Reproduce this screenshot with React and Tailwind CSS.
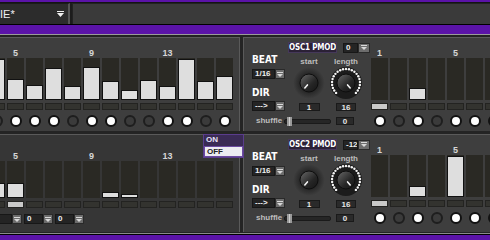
import React from 'react';

const topLeft = [
  { n: 4, h: 41, on: false },
  { n: 5, h: 21, on: true },
  { n: 6, h: 15, on: true },
  { n: 7, h: 32, on: true },
  { n: 8, h: 14, on: false },
  { n: 9, h: 33, on: true },
  { n: 10, h: 19, on: true },
  { n: 11, h: 10, on: false },
  { n: 12, h: 20, on: false },
  { n: 13, h: 14, on: true },
  { n: 14, h: 41, on: true },
  { n: 15, h: 19, on: false },
  { n: 16, h: 24, on: true },
];

const bottomLeft = [
  { n: 4, h: 15 },
  { n: 5, h: 15, led: true },
  { n: 6, h: 0 },
  { n: 7, h: 0 },
  { n: 8, h: 0 },
  { n: 9, h: 0 },
  { n: 10, h: 6 },
  { n: 11, h: 4 },
  { n: 12, h: 0 },
  { n: 13, h: 0 },
  { n: 14, h: 0 },
  { n: 15, h: 0 },
  { n: 16, h: 0 },
];

const osc1 = [
  { n: 1, h: 0, on: true, led: true },
  { n: 2, h: 0, on: false },
  { n: 3, h: 12, on: true },
  { n: 4, h: 0, on: false },
  { n: 5, h: 0, on: true },
  { n: 6, h: 0, on: true },
  { n: 7, h: 0, on: true },
];

const osc2 = [
  { n: 1, h: 0, on: true, led: true },
  { n: 2, h: 0, on: false },
  { n: 3, h: 11, on: true },
  { n: 4, h: 0, on: false },
  { n: 5, h: 41, on: true },
  { n: 6, h: 0, on: true },
  { n: 7, h: 0, on: true },
];

const showLabel = (n) => n === 1 || n === 5 || n === 9 || n === 13;

const Step = ({ s, colH = 42, circles = true }) => (
  <div className="w-[17px] shrink-0 flex flex-col items-center">
    <div className="h-[9px] text-[9px] leading-[9px] font-bold text-[#d6d6d6]">
      {showLabel(s.n) ? s.n : ''}
    </div>
    <div className="w-[17px] bg-[#2a2924] flex flex-col justify-end" style={{ height: colH }}>
      {s.h > 0 && <div className="w-full bg-[#dedede] border border-[#111]" style={{ height: s.h }} />}
    </div>
    <div
      className={
        'mt-[3px] w-[17px] h-[7px] border border-[#232321] ' +
        (s.led ? 'bg-[#c9c9c9]' : 'bg-[#33332f]')
      }
    />
    {circles && (
      <div
        className={
          'mt-[5px] w-[12px] h-[12px] rounded-full border-2 ' +
          (s.on ? 'bg-white border-[#121212]' : 'bg-[#3b3b3b] border-[#1e1e1e]')
        }
      />
    )}
  </div>
);

const Arrow = ({ w = 'w-[10px]' }) => (
  <div className={w + ' h-full bg-[#6d6d6d] border border-[#2a2a2a] flex items-center justify-center'}>
    <svg width="6" height="5" viewBox="0 0 6 5">
      <rect x="0" y="0" width="6" height="1" fill="#d8d8d8" />
      <path d="M0 2 L6 2 L3 5 Z" fill="#d8d8d8" />
    </svg>
  </div>
);

const Drop = ({ text, w = 'w-[33px]', arrow = 'w-[10px]' }) => (
  <div className={w + ' h-[10px] flex'}>
    <div className="flex-1 h-full bg-[#242424] border border-[#171717] text-[8px] leading-[8px] font-bold text-[#eeeeee] pl-[2px] whitespace-nowrap overflow-hidden">
      {text}
    </div>
    <Arrow w={arrow} />
  </div>
);

const Knob = ({ angle, ring }) => {
  const rad = ((angle - 90) * Math.PI) / 180;
  const x1 = 17 + Math.cos(rad) * 2.5;
  const y1 = 17 + Math.sin(rad) * 2.5;
  const x2 = 17 + Math.cos(rad) * 6.5;
  const y2 = 17 + Math.sin(rad) * 6.5;
  const dots = [];
  if (ring) {
    for (let i = 0; i < 23; i++) {
      const a = ((-135 + (270 / 22) * i - 90) * Math.PI) / 180;
      dots.push(<circle key={i} cx={17 + Math.cos(a) * 14} cy={17 + Math.sin(a) * 14} r="1.2" fill="#f4f4f4" />);
    }
  }
  return (
    <svg width="34" height="34" viewBox="0 0 34 34">
      <defs>
        <radialGradient id="halo" cx="50%" cy="50%" r="50%">
          <stop offset="55%" stopColor="#262626" />
          <stop offset="100%" stopColor="#3f3f3f" />
        </radialGradient>
        <linearGradient id="body" x1="0" y1="0" x2="1" y2="1">
          <stop offset="0%" stopColor="#6a6a6a" />
          <stop offset="60%" stopColor="#262626" />
          <stop offset="100%" stopColor="#141414" />
        </linearGradient>
      </defs>
      {!ring && <circle cx="17" cy="17" r="16" fill="url(#halo)" />}
      {ring && <circle cx="17" cy="17" r="16" fill="#1c1c1c" />}
      {dots}
      <circle cx="17" cy="17" r="9" fill="url(#body)" stroke="#0e0e0e" strokeWidth="1" />
      <line x1={x1} y1={y1} x2={x2} y2={y2} stroke="#f2f2f2" strokeWidth="1.6" strokeLinecap="round" />
    </svg>
  );
};

const Value = ({ v, w = 'w-[21px]' }) => (
  <div className={w + ' h-[8px] bg-[#2a2a2a] border border-[#1a1a1a] text-[8px] leading-[7px] font-bold text-[#e6e6e6] text-center'}>
    {v}
  </div>
);

const OscPanel = ({ name, val, steps }) => (
  <div className="h-full bg-[#3e3e3e] border-l border-t border-[#5a5a5a] flex overflow-hidden">
    <div className="w-[127px] shrink-0 flex flex-col">
      <div className="mt-[4px] ml-[44px] flex gap-[6px] items-center">
        <div className="w-[49px] h-[11px] bg-[#2b2136] border border-[#45385a] text-[8px] leading-[9px] font-bold text-white text-center whitespace-nowrap overflow-hidden font-['DejaVu_Sans_Condensed','DejaVu_Sans',sans-serif] tracking-[-0.2px]">
          {name}
        </div>
        <Drop text={val} w="w-[27px]" arrow="w-[12px]" />
      </div>
      <div className="flex">
        <div className="ml-[8px] w-[34px] flex flex-col">
          <div className="mt-[2px] text-[10px] leading-[10px] font-bold text-white font-['DejaVu_Sans_Condensed','DejaVu_Sans',sans-serif]">BEAT</div>
          <div className="mt-[4px]"><Drop text="1/16" /></div>
          <div className="mt-[9px] text-[10px] leading-[10px] font-bold text-white font-['DejaVu_Sans_Condensed','DejaVu_Sans',sans-serif]">DIR</div>
          <div className="mt-[3px]"><Drop text="--->" /></div>
        </div>
        <div className="ml-[6px] w-[34px] flex flex-col items-center">
          <div className="mt-[5px] h-[8px] text-[8px] leading-[8px] font-bold text-[#bdbdbd]">start</div>
          <Knob angle={220} />
          <div className="mt-[3px]"><Value v="1" /></div>
        </div>
        <div className="ml-[3px] w-[34px] flex flex-col items-center">
          <div className="mt-[5px] h-[8px] text-[8px] leading-[8px] font-bold text-[#bdbdbd]">length</div>
          <Knob angle={140} ring />
          <div className="mt-[3px]"><Value v="16" w="w-[20px]" /></div>
        </div>
      </div>
      <div className="mt-[6px] flex items-center h-[8px]">
        <div className="ml-[12px] w-[28px] text-[8px] leading-[8px] font-bold text-[#bdbdbd]">shuffle</div>
        <div className="w-[47px] h-[5px] bg-[#262626] border border-[#1a1a1a] rounded-[2px] flex items-center">
          <div className="ml-[2px] w-[5px] h-[9px] bg-[#cfcfcf] border-x-2 border-[#9a9a9a]" />
        </div>
        <div className="ml-[5px]"><Value v="0" w="w-[18px]" /></div>
      </div>
    </div>
    <div className="mt-[11px] flex gap-[2px]">
      {steps.map((s) => (
        <Step key={s.n} s={s} />
      ))}
    </div>
  </div>
);

export default function App() {
  return (
    <div className="w-[490px] h-[240px] overflow-hidden bg-[#242424] flex flex-col font-['Liberation_Sans',Arial,sans-serif]">
      <div className="h-[2px] bg-[#5b13a8]" />
      <div className="h-[1px] bg-[#141414]" />
      <div className="h-[21px] flex bg-[#1c1c1c]">
        <div className="w-[70px] bg-[#2c2c2c] border-t border-[#1a1a1a] border-r-2 border-r-[#555] flex items-center justify-between pr-[4px]">
          <span className="text-[11px] leading-[11px] text-[#f0f0f0]">IE*</span>
          <svg width="7" height="6" viewBox="0 0 7 6">
            <rect x="0" y="0" width="7" height="1" fill="#f0f0f0" />
            <path d="M0 2 L7 2 L3.5 6 Z" fill="#f0f0f0" />
          </svg>
        </div>
        <div className="w-[2px]" />
        <div className="flex-1 bg-[#3a3a3a] border-t border-l border-[#222]" />
      </div>
      <div className="h-[1px] bg-black" />
      <div className="h-[9px] bg-[#5b13a8]" />
      <div className="h-[1px] bg-[#9a9a9a]" />
      <div className="h-[2px] bg-[#222]" />
      <div className="relative grid grid-cols-[240px_247px] grid-rows-[94px_98px] gap-[3px]">
        <div className="bg-[#3e3e3e] border-r border-t border-[#5a5a5a] overflow-hidden">
          <div className="mt-[11px] ml-[-12px] flex gap-[2px]">
            {topLeft.map((s) => (
              <Step key={s.n} s={s} />
            ))}
          </div>
        </div>
        <OscPanel name="OSC1 PMOD" val="0" steps={osc1} />
        <div className="bg-[#363636] border-r border-t border-[#5a5a5a] overflow-hidden">
          <div className="mt-[17px] ml-[-12px] flex gap-[2px]">
            {bottomLeft.map((s) => (
              <Step key={s.n} s={s} colH={37} circles={false} />
            ))}
          </div>
          <div className="mt-[6px] ml-[-7px] flex gap-[2px]">
            {['', '0', '0'].map((v, i) => (
              <Drop key={i} text={v} w="w-[29px]" />
            ))}
          </div>
        </div>
        <OscPanel name="OSC2 PMOD" val="-12" steps={osc2} />
        <div className="absolute left-[203px] top-[97px] w-[41px] border border-[#5a3d8c] bg-[#3a2b55] text-[8px] leading-[10px] font-bold">
          <div className="pl-[2px] h-[11px] text-[#e6e0f5]">ON</div>
          <div className="pl-[2px] h-[11px] bg-[#ececf2] border border-[#6b4aa0] text-[#222]">OFF</div>
        </div>
      </div>
      <div className="h-[1px] mt-[1px] bg-[#8a8a8a]" />
      <div className="h-[1px] bg-black" />
      <div className="flex-1 bg-[#5b13a8]" />
    </div>
  );
}
